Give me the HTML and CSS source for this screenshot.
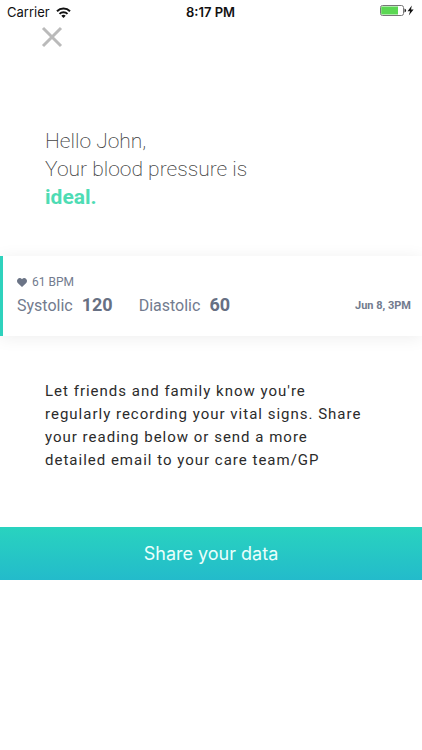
FILE: index.html
```html
<!DOCTYPE html>
<html lang="en">
  <head>
    <meta charset="UTF-8" />
    <meta name="viewport" content="width=device-width, initial-scale=1.0" />
    <title>Blood pressure</title>
    <link rel="stylesheet" href="styles.css">
  </head>
  <body>
    <!-- Status bar -->
    <header class="status-bar">
      <div class="carrier">
        <span>Carrier</span>
        <svg width="15" height="11" viewBox="0 0 15 11" fill="none" stroke="#111" stroke-width="2">
          <path d="M1 4.2a9.2 9.2 0 0 1 13 0" />
          <path d="M3.5 6.9a5.7 5.7 0 0 1 8 0" />
          <path d="M7.5 11L5.3 8.8a3.1 3.1 0 0 1 4.4 0z" fill="#111" stroke="none" />
        </svg>
      </div>
      <div class="time">8:17 PM</div>
      <div class="battery">
        <svg width="34" height="12" viewBox="0 0 34 12">
          <rect x="0.5" y="0.5" width="23" height="10" rx="2" fill="#fff" stroke="#777" />
          <path d="M2 1.5h16v8H2a.8.8 0 0 1-.8-.8V2.3a.8.8 0 0 1 .8-.8z" fill="#5bd753" />
          <path d="M24.5 3.5q1.6.4 1.6 2t-1.6 2z" fill="#222" />
          <path d="M31.8 .6L27.6 6.3h2.5L28.8 10.6l4.8-6h-2.6z" fill="#111" />
        </svg>
      </div>
    </header>

    <button class="close" type="button" aria-label="Close">
      <svg width="22" height="22" viewBox="0 0 22 22" stroke="#bababa" stroke-width="3">
        <path d="M2 2l18 18M20 2L2 20" />
      </svg>
    </button>

    <main>
      <h1>
        Hello John,<br />
        Your blood pressure is<br />
        <strong>ideal.</strong>
      </h1>

      <!-- Latest reading -->
      <section class="reading">
        <div class="pulse">
          <svg width="10" height="9" viewBox="0 0 10 9" fill="#6b7486">
            <path d="M5 9L1 5.3C-.3 4-.3 2 .8.9 2 -.3 4 -.2 5 1.3 6-.2 8-.3 9.2.9c1.1 1.1 1.1 3.1-.2 4.4z" />
          </svg>
          <span>61 BPM</span>
        </div>
        <div class="values">
          <div class="value">Systolic <b>120</b></div>
          <div class="value">Diastolic <b>60</b></div>
          <time>Jun 8, 3PM</time>
        </div>
      </section>

      <p class="info">
        Let friends and family know you're regularly recording your vital signs. Share your reading below or send a more detailed email to your care team/GP
      </p>

      <button class="share" type="button">Share your data</button>
    </main>
  </body>
</html>
```

FILE: styles.css
```css
body {
  margin: 0;
  background-color: #fff;
  font-family: Roboto, "Liberation Sans", sans-serif;
  color: #2b2b2b;
}

svg {
  display: block;
}

button {
  border: none;
  cursor: pointer;
}

/* Status bar */
.status-bar {
  display: grid;
  grid-template-columns: 1fr auto 1fr;
  align-items: center;
  height: 24px;
  padding: 0 8px 0 7px;
  font-family: Inter, "Liberation Sans", sans-serif;
  font-size: 13px;
  color: #111;
}

.carrier {
  display: flex;
  align-items: center;
  gap: 6px;
}

.time {
  font-weight: 600;
}

.battery {
  justify-self: end;
  padding-bottom: 2px;
}

.close {
  display: block;
  margin: 2px 0 0 41px;
  padding: 0;
  background: none;
}

/* Greeting */
h1 {
  margin: 79px 45px 45px;
  font-size: 21px;
  font-weight: 200;
  line-height: 28px;
  color: #444;
}

h1 strong {
  font-weight: 700;
  color: #4edcb4;
}

/* Reading card */
.reading {
  box-sizing: border-box;
  padding: 17px 11px 16px 14px;
  border-left: 3px solid #2fd2bd;
  background-color: #fff;
  box-shadow: 0 2px 16px rgba(0, 0, 0, 0.07);
  color: #727b8e;
}

.pulse {
  display: flex;
  align-items: center;
  gap: 5px;
  font-size: 12px;
  line-height: 18px;
}

.values {
  display: flex;
  align-items: center;
  gap: 26px;
  font-size: 16px;
  line-height: 28px;
}

.value {
  display: flex;
  align-items: baseline;
  gap: 9px;
}

.value b {
  font-size: 18px;
  color: #677083;
}

.reading time {
  margin-left: auto;
  font-size: 11px;
  font-weight: 700;
}

.info {
  margin: 44px 52px 55px 45px;
  font-size: 15px;
  line-height: 23px;
  letter-spacing: 1px;
}

.share {
  display: block;
  width: 100%;
  padding: 14px;
  background: linear-gradient(#29d3bf, #23bbcb);
  font-family: Inter, "Liberation Sans", sans-serif;
  font-size: 18px;
  line-height: 25px;
  color: #eafffc;
}
```
